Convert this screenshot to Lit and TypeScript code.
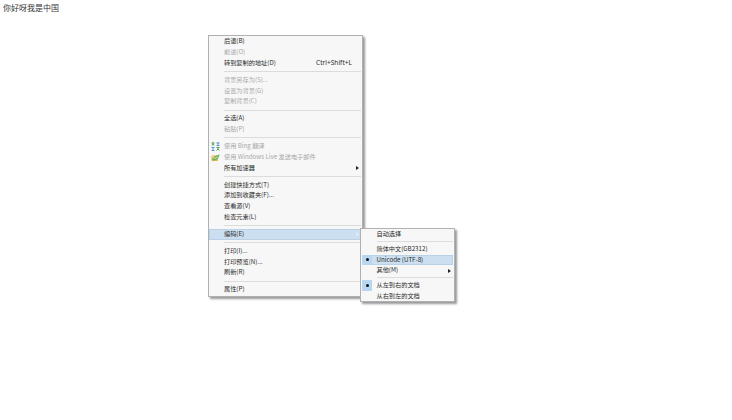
import { LitElement, html, css, nothing } from "lit";
import { customElement } from "lit/decorators.js";

type Row = { t: string; k?: string; d?: boolean; arrow?: boolean; hot?: boolean; icon?: string; dot?: boolean };

const main: (Row | null)[] = [
  { t: "后退(B)" },
  { t: "前进(O)", d: true },
  { t: "转到复制的地址(D)", k: "Ctrl+Shift+L" },
  null,
  { t: "背景另存为(S)...", d: true },
  { t: "设置为背景(G)", d: true },
  { t: "复制背景(C)", d: true },
  null,
  { t: "全选(A)" },
  { t: "粘贴(P)", d: true },
  null,
  { t: "使用 Bing 翻译", d: true, icon: "bing" },
  { t: "使用 Windows Live 发送电子邮件", d: true, icon: "live" },
  { t: "所有加速器", arrow: true },
  null,
  { t: "创建快捷方式(T)" },
  { t: "添加到收藏夹(F)..." },
  { t: "查看源(V)" },
  { t: "检查元素(L)" },
  null,
  { t: "编码(E)", hot: true, arrow: true },
  null,
  { t: "打印(I)..." },
  { t: "打印预览(N)..." },
  { t: "刷新(R)" },
  null,
  { t: "属性(P)" },
];

const sub: (Row | null)[] = [
  { t: "自动选择" },
  null,
  { t: "简体中文(GB2312)" },
  { t: "Unicode (UTF-8)", hot: true, dot: true },
  { t: "其他(M)", arrow: true },
  null,
  { t: "从左到右的文档", dot: true },
  { t: "从右到左的文档" },
];

@customElement("app-root")
export class AppRoot extends LitElement {
  static styles = css`
    :host {
      display: block;
      position: relative;
      width: 732px;
      height: 420px;
      background: #fff;
      overflow: hidden;
      font-family: "Noto Sans CJK SC", "Liberation Sans", sans-serif;
      color: #222;
    }
    .page {
      padding: 2px 0 0 3px;
      font-size: 8px;
      line-height: 11px;
      color: #333;
    }
    .menu {
      position: absolute;
      box-sizing: border-box;
      display: flex;
      flex-direction: column;
      background: #f7f7f7;
      border: 1px solid #b0b0b0;
      box-shadow: 1.5px 1.5px 2px rgba(70, 70, 70, 0.55);
      font-size: 6.2px;
    }
    .main { left: 208px; top: 35px; width: 155px; height: 262px; padding: 0.25px 1px 0 0; }
    .sub { left: 360px; top: 228px; width: 95px; height: 74px; padding: 0.25px 1px 0; }
    .row {
      flex: none;
      height: 10.75px;
      line-height: 10.75px;
      display: grid;
      align-items: center;
      white-space: nowrap;
      color: #2b2b2b;
    }
    .main .row { grid-template-columns: 15px 1fr auto 8px; }
    .sub .row { grid-template-columns: 14.5px 1fr 8px; }
    .row.d { color: #a9a9a9; }
    .hot {
      background: #cbdff0;
      box-shadow: inset 0 0 0 0.5px #a9c6e0;
    }
    .sep { flex: none; height: 6.25px; display: flex; align-items: center; padding-left: 15px; }
    .sub .sep { height: 3.75px; padding-left: 14.5px; }
    .sep::after { content: ""; flex: 1; height: 1px; background: #dcdcdc; }
    .ico { display: flex; align-items: center; padding-left: 1.5px; }
    .ico svg { display: block; }
    .gut { width: 10px; height: 10.75px; background: #b9d6f0; display: flex; align-items: center; justify-content: center; }
    .gut i { display: block; width: 3px; height: 3px; border-radius: 50%; background: #111; }
    .arrow { width: 0; height: 0; border-left: 3px solid #222; border-top: 2.5px solid transparent; border-bottom: 2.5px solid transparent; justify-self: center; }
    .hot .arrow.pale { border-left-color: #e4eef8; }
    .key { padding-right: 1px; font-family: "Noto Sans", "Liberation Sans", sans-serif; font-size: 6.6px; }
  `;

  private icon(name?: string) {
    if (name === "bing")
      return html`<svg width="9" height="9" viewBox="0 0 9 9">
        <path d="M0.5 1h3M2 0.3v1.5M1 3.5l1-1.6 1 1.6" stroke="#3f9a3c" stroke-width="0.9" fill="none"></path>
        <path d="M5.5 1h3M7 0.3v3.2M5.5 3.5h3" stroke="#4b8fd0" stroke-width="0.9" fill="none"></path>
        <path d="M0.5 5.5h3M2 5v3.5M0.5 8.5h3" stroke="#4b8fd0" stroke-width="0.9" fill="none"></path>
        <path d="M5.5 5.5h3M7 5v2M5.5 8.5l1.5-1.5 1.5 1.5" stroke="#3f9a3c" stroke-width="0.9" fill="none"></path>
      </svg>`;
    if (name === "live")
      return html`<svg width="9" height="9" viewBox="0 0 9 9">
        <rect x="0.5" y="2.5" width="6.5" height="5.5" rx="0.8" fill="#e8b64c"></rect>
        <path d="M1 7C2 4 5 2 8.5 1.5 8.5 4 7 6.5 3.5 7.5Z" fill="#6fb25a"></path>
        <path d="M1 3.5L4 5.5 7 3.5" stroke="#fff" stroke-width="0.6" fill="none"></path>
      </svg>`;
    return nothing;
  }

  private row(r: Row | null, isSub: boolean) {
    if (!r) return html`<div class="sep"></div>`;
    const cls = `row ${r.d ? "d" : ""} ${r.hot ? "hot" : ""}`;
    const lead = r.dot
      ? html`<div class="gut"><i></i></div>`
      : html`<div class="ico">${this.icon(r.icon)}</div>`;
    return html`<div class=${cls}>
      ${lead}
      <span>${r.t}</span>
      ${isSub ? nothing : html`<span class="key">${r.k ?? ""}</span>`}
      ${r.arrow ? html`<div class="arrow ${r.hot ? "pale" : ""}"></div>` : html`<span></span>`}
    </div>`;
  }

  render() {
    return html`
      <div class="page">你好呀我是中国</div>
      <div class="menu main">${main.map((r) => this.row(r, false))}</div>
      <div class="menu sub">${sub.map((r) => this.row(r, true))}</div>
    `;
  }
}
